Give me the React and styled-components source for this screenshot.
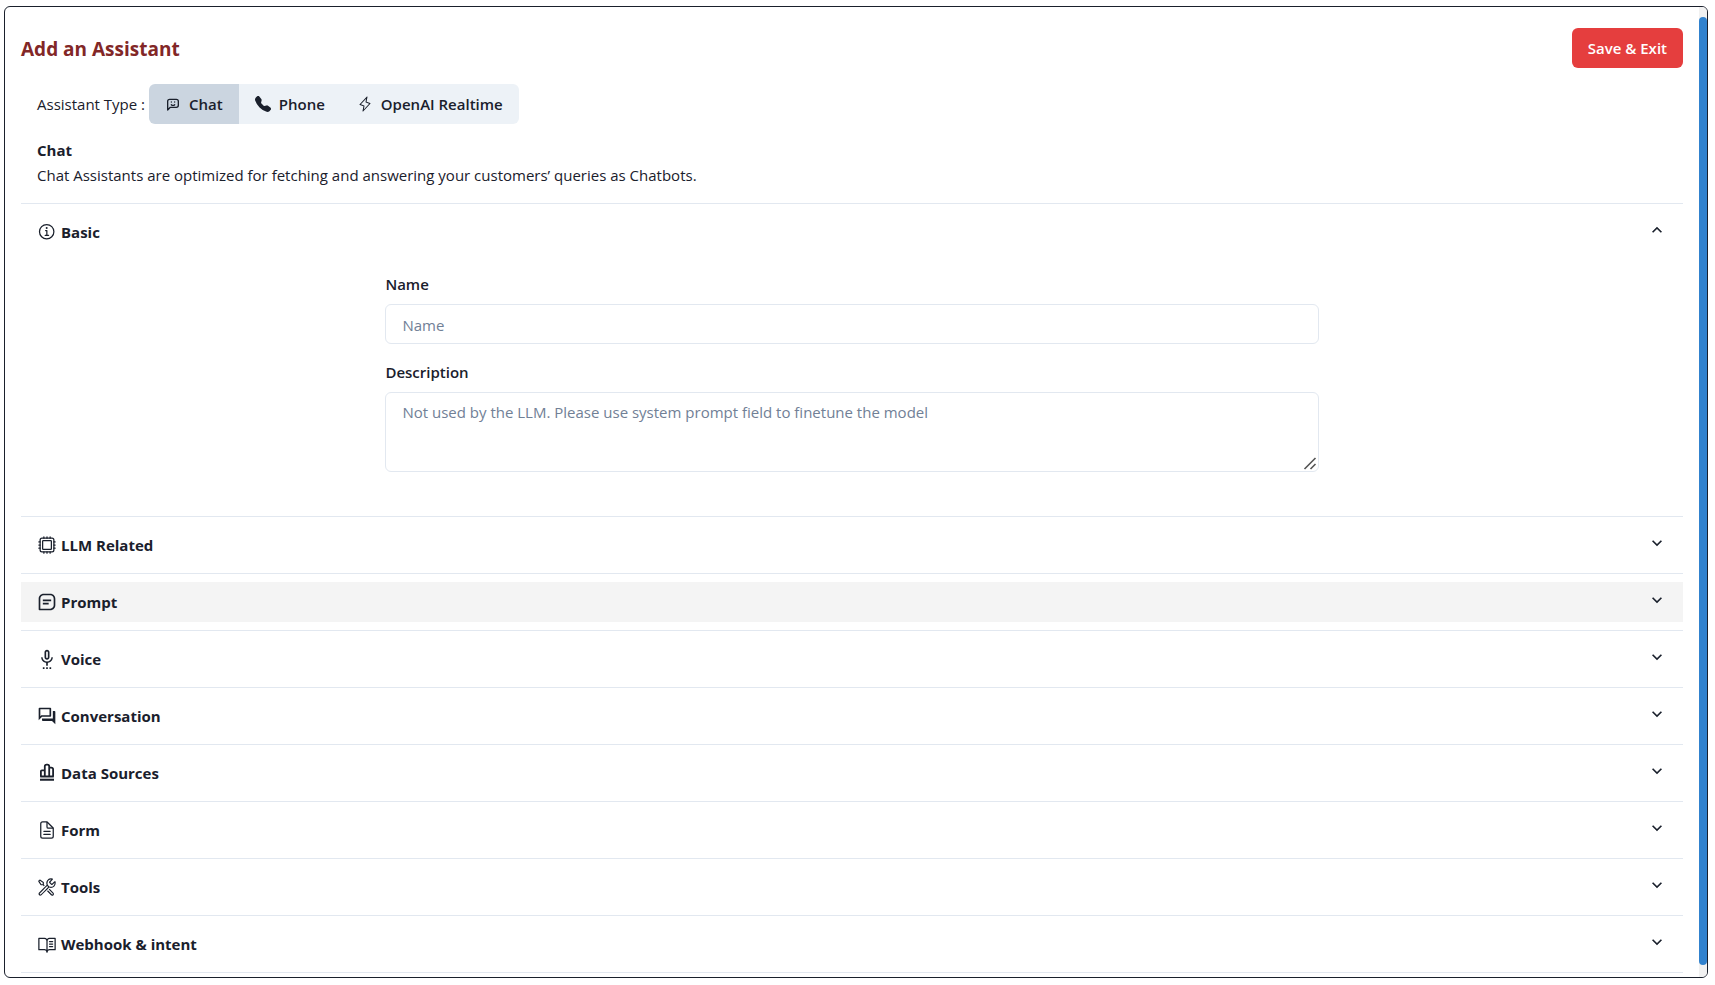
import { useState } from "react";
import styled, { createGlobalStyle } from "styled-components";
import { BiMessageSquareDetail } from "react-icons/bi";
import { BsTelephoneFill } from "react-icons/bs";
import { IoDocumentTextOutline, IoHardwareChipOutline, IoInformationCircleOutline } from "react-icons/io5";
import { MdExpandMore, MdOutlineQuestionAnswer, MdOutlineSettingsVoice } from "react-icons/md";
import { PiBookOpenText, PiLightning } from "react-icons/pi";
import { VscTools } from "react-icons/vsc";

const types = [
    { name: "Chat", icon: <ChatbotIcon /> },
    { name: "Phone", icon: <BsTelephoneFill /> },
    { name: "OpenAI Realtime", icon: <PiLightning /> },
];

const sections = [
    { title: "Basic", icon: <IoInformationCircleOutline /> },
    { title: "LLM Related", icon: <IoHardwareChipOutline /> },
    { title: "Prompt", icon: <BiMessageSquareDetail />, active: true },
    { title: "Voice", icon: <MdOutlineSettingsVoice /> },
    { title: "Conversation", icon: <MdOutlineQuestionAnswer /> },
    { title: "Data Sources", icon: <BarsIcon /> },
    { title: "Form", icon: <IoDocumentTextOutline /> },
    { title: "Tools", icon: <VscTools /> },
    { title: "Webhook & intent", icon: <PiBookOpenText /> },
];

export default function App() {
    const [type, setType] = useState("Chat");
    const [opened, setOpened] = useState("Basic");

    return (
        <>
            <GlobalStyle />
            <Page>
                <Frame>
                    <Content>
                        <Header>
                            <Title>Add an Assistant</Title>
                            <SaveButton>Save & Exit</SaveButton>
                        </Header>
                        <TypeRow>
                            <span>Assistant Type :</span>
                            <TypeGroup>
                                {types.map(({ name, icon }) => (
                                    <TypeButton key={name} $selected={name === type} onClick={() => setType(name)}>
                                        {icon}
                                        {name}
                                    </TypeButton>
                                ))}
                            </TypeGroup>
                        </TypeRow>
                        <Intro>
                            <IntroTitle>Chat</IntroTitle>
                            <IntroText>
                                Chat Assistants are optimized for fetching and answering your customers’ queries as Chatbots.
                            </IntroText>
                        </Intro>
                        <Accordion>
                            {sections.map(({ title, icon, active }) => {
                                const isOpen = title === opened;
                                return (
                                    <Section key={title}>
                                        <SectionButton
                                            $active={active}
                                            aria-expanded={isOpen}
                                            onClick={() => setOpened(isOpen ? "" : title)}
                                        >
                                            <SectionTitle>
                                                {icon}
                                                {title}
                                            </SectionTitle>
                                            <Chevron $open={isOpen} />
                                        </SectionButton>
                                        {isOpen && title === "Basic" && <BasicForm />}
                                    </Section>
                                );
                            })}
                        </Accordion>
                    </Content>
                    <ScrollTrack>
                        <ScrollThumb />
                    </ScrollTrack>
                </Frame>
            </Page>
        </>
    );
}

function BasicForm() {
    return (
        <Form>
            <Field>
                <Label htmlFor="name">Name</Label>
                <Input id="name" placeholder="Name" />
            </Field>
            <Field>
                <Label htmlFor="description">Description</Label>
                <TextArea
                    id="description"
                    placeholder="Not used by the LLM. Please use system prompt field to finetune the model"
                />
            </Field>
        </Form>
    );
}

function ChatbotIcon() {
    return (
        <svg viewBox="0 0 24 24" fill="none" stroke="currentColor" strokeWidth="2" strokeLinecap="round" strokeLinejoin="round">
            <path d="M4 21v-13a3 3 0 0 1 3 -3h10a3 3 0 0 1 3 3v6a3 3 0 0 1 -3 3h-9l-4 4" />
            <path d="M9.5 9h.01M14.5 9h.01M9.5 13a3.5 3.5 0 0 0 5 0" />
        </svg>
    );
}

function BarsIcon() {
    return (
        <svg viewBox="0 0 20 20" fill="none" stroke="currentColor" strokeWidth="1.8" strokeLinejoin="round">
            <path d="M3.9 13.3v-5q0-1 1-1h2.9v6zM7.8 13.3v-10q0-1.6 1.8-1.6h.8q1.8 0 1.8 1.6v10zM12.2 13.3v-8.6h2q1.9 0 1.9 1.6v7z" />
            <path d="M3 16.8h14" />
            <path d="M3 15h14" strokeOpacity="0.3" />
        </svg>
    );
}

const GlobalStyle = createGlobalStyle`
    * {
        box-sizing: border-box;
    }

    body {
        margin: 0;
        background: #FFFFFF;
        color: #1A202C;
        font-family: "Open Sans", "Noto Sans", sans-serif;
        font-size: 15px;
        line-height: 24px;
    }

    button, input, textarea {
        font: inherit;
        color: inherit;
    }

    h1, h2, p {
        margin: 0;
    }
`;

const Page = styled.div`
    min-height: 100vh;
    padding: 6px 7px 7px 4px;
    display: flex;
`;

const Frame = styled.div`
    flex: 1;
    display: flex;
    border: 1px solid #1A202C;
    border-radius: 6px;
    overflow: hidden;
`;

const Content = styled.main`
    flex: 1;
    padding: 21px 16px 4px;
`;

const ScrollTrack = styled.div`
    width: 8px;
    padding: 10px 0 12px;
    display: flex;
    background: #F1F1F1;
`;

const ScrollThumb = styled.div`
    flex: 1;
    border-radius: 4px;
    background: #3182CE;
`;

const Header = styled.header`
    display: flex;
    justify-content: space-between;
    align-items: center;
`;

const Title = styled.h1`
    padding-top: 2px;
    font-size: 19px;
    line-height: 24px;
    font-weight: 700;
    color: #822727;
`;

const SaveButton = styled.button`
    height: 40px;
    padding: 0 16px;
    border: none;
    border-radius: 6px;
    background: #E53E3E;
    color: #FFFFFF;
    font-weight: 600;
`;

const TypeRow = styled.div`
    display: flex;
    align-items: center;
    gap: 4px;
    margin-top: 16px;
    padding-left: 16px;
`;

const TypeGroup = styled.div`
    display: flex;
    border-radius: 6px;
    overflow: hidden;
`;

const TypeButton = styled.button`
    display: flex;
    align-items: center;
    gap: 8px;
    height: 40px;
    padding: 0 16px;
    border: none;
    background: ${({ $selected }) => ($selected ? "#CBD5E0" : "#EDF2F7")};
    font-weight: 600;

    svg {
        width: 16px;
        height: 16px;
    }
`;

const Intro = styled.div`
    padding: 14px 16px 15px;
`;

const IntroTitle = styled.h2`
    font-size: 15px;
    line-height: 24px;
    font-weight: 700;
`;

const IntroText = styled.p`
    line-height: 26px;
`;

const Accordion = styled.div`
    border-bottom: 1px solid #E2E8F0;
`;

const Section = styled.section`
    padding: 8px 0;
    border-top: 1px solid #E2E8F0;
`;

const SectionButton = styled.button`
    display: flex;
    justify-content: space-between;
    align-items: flex-start;
    width: 100%;
    padding: 8px 16px;
    border: none;
    background: ${({ $active }) => ($active ? "#F4F4F4" : "transparent")};
    font-weight: 700;
`;

const SectionTitle = styled.span`
    display: flex;
    align-items: center;
    gap: 4px;

    svg {
        width: 20px;
        height: 20px;
    }
`;

const Chevron = styled(MdExpandMore)`
    width: 20px;
    height: 20px;
    transform: ${({ $open }) => ($open ? "rotate(180deg)" : "none")};
`;

const Form = styled.form`
    display: flex;
    flex-direction: column;
    gap: 16px;
    width: 60%;
    margin: 0 auto;
    padding: 20px 32px 36px;
`;

const Field = styled.div`
    display: flex;
    flex-direction: column;
    gap: 8px;
`;

const Label = styled.label`
    font-weight: 600;
`;

const Input = styled.input`
    height: 40px;
    padding: 2px 16px 0;
    border: 1px solid #E2E8F0;
    border-radius: 6px;
    background: #FFFFFF;

    &::placeholder {
        color: #718096;
    }
`;

const TextArea = styled.textarea`
    height: 80px;
    padding: 8px 16px;
    border: 1px solid #E2E8F0;
    border-radius: 6px;
    background: #FFFFFF;
    line-height: 22px;
    resize: vertical;

    &::placeholder {
        color: #718096;
    }

    &::-webkit-resizer {
        background: url("data:image/svg+xml,%3Csvg xmlns='http://www.w3.org/2000/svg' width='15' height='15'%3E%3Cpath d='M1.5 13l11-11M7.5 13l5-5' stroke='%23555' stroke-width='1.6'/%3E%3C/svg%3E") no-repeat;
    }
`;
